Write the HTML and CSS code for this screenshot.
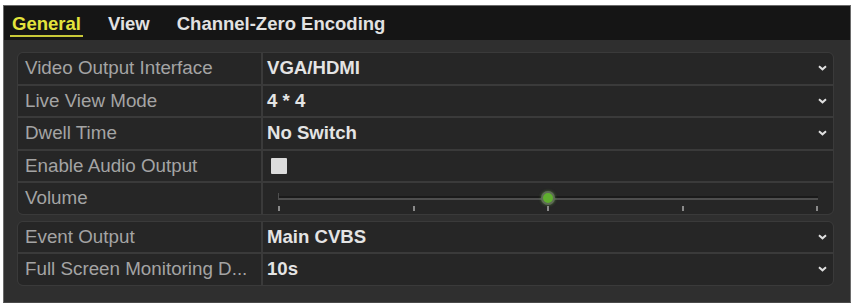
FILE: index.html
```html
<!DOCTYPE html>
<html>
<head>
<meta charset="utf-8">
<link rel="stylesheet" href="styles.css">
</head>
<body>
<div class="panel">
  <div class="tabs">
    <span class="tab active">General</span>
    <span class="tab">View</span>
    <span class="tab">Channel-Zero Encoding</span>
  </div>
  <div class="content">
    <div class="group">
      <div class="row">
        <div class="label">Video Output Interface</div>
        <div class="value select"><span>VGA/HDMI</span><svg class="chev" width="9" height="6" viewBox="0 0 9 6"><path d="M1 1.2 L4.5 4.3 L8 1.2" fill="none" stroke="#e0e0e0" stroke-width="2"/></svg></div>
      </div>
      <div class="row">
        <div class="label">Live View Mode</div>
        <div class="value select"><span>4 * 4</span><svg class="chev" width="9" height="6" viewBox="0 0 9 6"><path d="M1 1.2 L4.5 4.3 L8 1.2" fill="none" stroke="#e0e0e0" stroke-width="2"/></svg></div>
      </div>
      <div class="row">
        <div class="label">Dwell Time</div>
        <div class="value select"><span>No Switch</span><svg class="chev" width="9" height="6" viewBox="0 0 9 6"><path d="M1 1.2 L4.5 4.3 L8 1.2" fill="none" stroke="#e0e0e0" stroke-width="2"/></svg></div>
      </div>
      <div class="row">
        <div class="label">Enable Audio Output</div>
        <div class="value"><span class="checkbox"></span></div>
      </div>
      <div class="row">
        <div class="label">Volume</div>
        <div class="value slider-cell">
          <div class="slider">
            <div class="track"></div>
            <div class="ticks"><i></i><i></i><i></i><i></i><i></i></div>
            <div class="knob"></div>
          </div>
        </div>
      </div>
    </div>
    <div class="group">
      <div class="row">
        <div class="label">Event Output</div>
        <div class="value select"><span>Main CVBS</span><svg class="chev" width="9" height="6" viewBox="0 0 9 6"><path d="M1 1.2 L4.5 4.3 L8 1.2" fill="none" stroke="#e0e0e0" stroke-width="2"/></svg></div>
      </div>
      <div class="row">
        <div class="label">Full Screen Monitoring D...</div>
        <div class="value select"><span>10s</span><svg class="chev" width="9" height="6" viewBox="0 0 9 6"><path d="M1 1.2 L4.5 4.3 L8 1.2" fill="none" stroke="#e0e0e0" stroke-width="2"/></svg></div>
      </div>
    </div>
  </div>
</div>
</body>
</html>
```
FILE: styles.css
```css
html, body {
  margin: 0;
  padding: 0;
  background: #ffffff;
}
body {
  font-family: "Liberation Sans", Arial, sans-serif;
  width: 854px;
  height: 304px;
  overflow: hidden;
}
.panel {
  margin: 5px 3px 0 3px;
  width: 846px;
  height: 296px;
  border: 1px solid #6a6a6a;
  border-bottom-color: #4a4a4a;
  background: #2f2f2f;
  display: flex;
  flex-direction: column;
}
.tabs {
  height: 34px;
  background: #151515;
  display: flex;
  align-items: stretch;
  padding-left: 8px;
  flex: none;
}
.tab {
  font-weight: bold;
  font-size: 18.5px;
  color: #e2e2e2;
  display: flex;
  align-items: center;
  padding-top: 1px;
  margin-right: 27px;
  position: relative;
}
.tab.active {
  color: #e4e43c;
}
.tab.active::after {
  content: "";
  position: absolute;
  left: -2px;
  right: -2px;
  bottom: 3px;
  height: 2px;
  background: #c8c838;
}
.content {
  padding: 12px 16px 0 13px;
  display: flex;
  flex-direction: column;
  gap: 6px;
}
.group {
  background: #3a3a3a;
  border: 1px solid #3a3a3a;
  border-radius: 6px;
  display: flex;
  flex-direction: column;
  gap: 2px;
  overflow: hidden;
}
.row {
  height: 30.5px;
  display: flex;
  gap: 2px;
}
.label {
  width: 243px;
  flex: none;
  background: #262626;
  color: #a4a4a4;
  font-size: 18.8px;
  white-space: nowrap;
  display: flex;
  align-items: center;
  padding-left: 7px;
  box-sizing: border-box;
}
.value {
  flex: 1;
  background: #262626;
  color: #e4e4e4;
  font-size: 18.6px;
  font-weight: bold;
  display: flex;
  align-items: center;
  padding-left: 4px;
  padding-right: 6px;
  box-sizing: border-box;
}
.value.select {
  justify-content: space-between;
}
.chev {
  display: block;
}
.checkbox {
  display: block;
  width: 16px;
  height: 16px;
  margin-left: 4px;
  background: #dcdcdc;
  border-radius: 1px;
}
.slider-cell {
  padding-left: 15px;
}
.slider {
  position: relative;
  width: 540px;
  height: 30px;
}
.track {
  position: absolute;
  left: 0;
  right: 0;
  top: 13px;
  height: 2px;
  background: #1a1a1a;
  border-bottom: 2px solid #4e4e4e;
}
.track::before {
  content: "";
  position: absolute;
  left: 0;
  top: -3px;
  width: 1px;
  height: 7px;
  background: #4e4e4e;
}
.ticks {
  position: absolute;
  left: 0;
  right: 0;
  top: 23px;
  display: flex;
  justify-content: space-between;
}
.ticks i {
  display: block;
  width: 2px;
  height: 5px;
  background: #8a8a8a;
}
.knob {
  position: absolute;
  left: 263px;
  top: 8px;
  width: 10px;
  height: 10px;
  border-radius: 50%;
  background: #5fae2e;
  border: 2px solid #5e6a56;
  box-shadow: 0 0 3px rgba(120, 200, 80, 0.5);
}
```
